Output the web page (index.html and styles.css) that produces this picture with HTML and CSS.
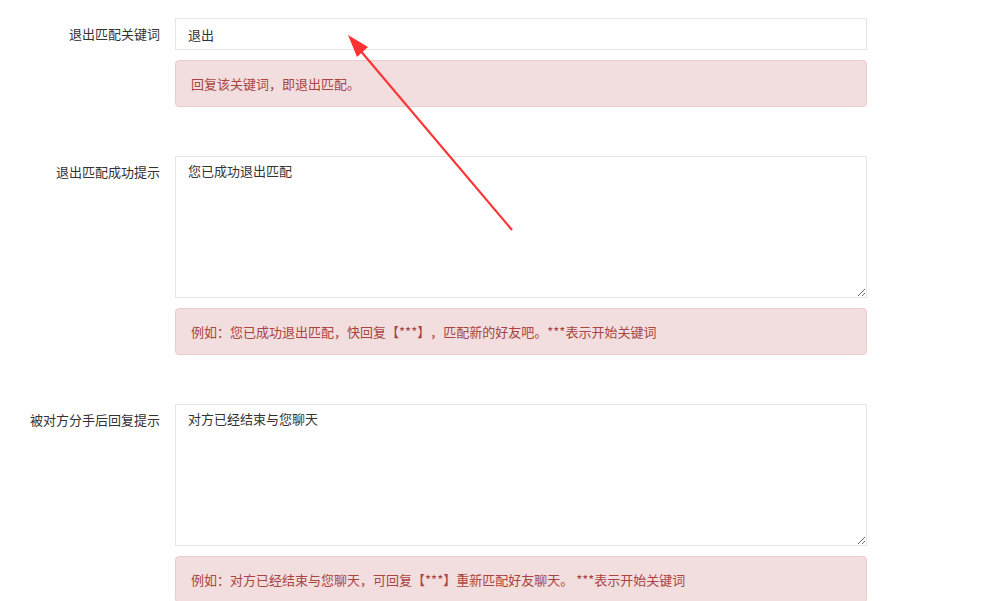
FILE: index.html
```html
<!DOCTYPE html>
<html lang="zh-CN">
  <head>
    <meta charset="UTF-8" />
    <title>匹配设置</title>
    <link rel="stylesheet" href="styles.css">
  </head>
  <body>
    <form class="form">
      <div class="group">
        <label class="label">退出匹配关键词</label>
        <div class="field">
          <input class="control" type="text" value="退出" />
          <div class="alert">回复该关键词，即退出匹配。</div>
        </div>
      </div>

      <div class="group">
        <label class="label">退出匹配成功提示</label>
        <div class="field">
          <textarea class="control area">您已成功退出匹配</textarea>
          <div class="alert">例如：您已成功退出匹配，快回复【***】，匹配新的好友吧。***表示开始关键词</div>
        </div>
      </div>

      <div class="group">
        <label class="label">被对方分手后回复提示</label>
        <div class="field">
          <textarea class="control area">对方已经结束与您聊天</textarea>
          <div class="alert">例如：对方已经结束与您聊天，可回复【***】重新匹配好友聊天。 ***表示开始关键词</div>
        </div>
      </div>
    </form>

    <svg class="arrow" width="1002" height="601" viewBox="0 0 1002 601">
      <line x1="512" y1="230" x2="359" y2="49" stroke="#f33" stroke-width="2.2" />
      <polygon points="348,35 368,47 357,57" fill="#f33" />
    </svg>
  </body>
</html>
```

FILE: styles.css
```css
* {
  box-sizing: border-box;
  margin: 0;
  padding: 0;
}

body {
  font-family: "Noto Sans CJK SC", "Liberation Sans", sans-serif;
  font-size: 13px;
  color: #333;
  background: #fff;
  position: relative;
  text-spacing-trim: space-all;
}

.form {
  padding-top: 18px;
}

.group {
  display: flex;
  margin-bottom: 49px;
}

.label {
  width: 175px;
  padding-right: 15px;
  padding-top: 7px;
  text-align: right;
  line-height: 18px;
}

.field {
  width: 692px;
}

.control {
  display: block;
  width: 100%;
  height: 32px;
  padding: 6px 12px;
  border: 1px solid #e5e5e5;
  font-family: inherit;
  font-size: 13px;
  color: #333;
  line-height: 18px;
  outline: none;
  text-spacing-trim: space-all;
}

.area {
  height: 142px;
  padding-top: 5px;
  resize: vertical;
}

.alert {
  margin-top: 10px;
  padding: 14px 15px;
  background: #f2dede;
  border: 1px solid #ebccd1;
  border-radius: 4px;
  color: #a94442;
  line-height: 17px;
}

.arrow {
  position: absolute;
  left: 0;
  top: 0;
  pointer-events: none;
}
```
